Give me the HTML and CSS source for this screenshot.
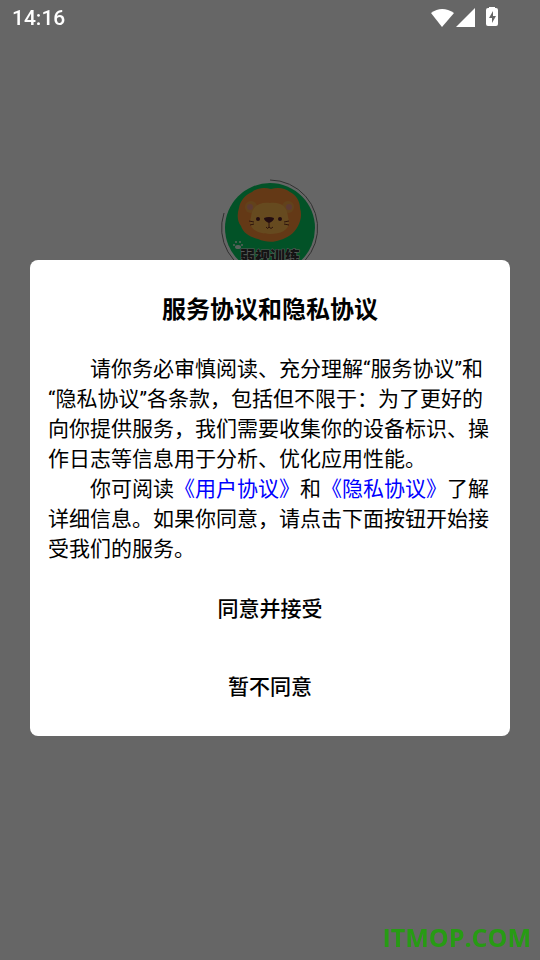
FILE: index.html
```html
<!DOCTYPE html>
<html lang="zh-CN">
<head>
  <meta charset="UTF-8">
  <meta name="viewport" content="width=device-width, initial-scale=1.0">
  <title>弱视训练</title>
  <link rel="stylesheet" href="styles.css">
</head>
<body>
  <!-- Splash page -->
  <main class="splash">
    <svg class="logo" viewBox="0 0 100 100" role="img" aria-label="弱视训练">
      <circle class="logo-bg" cx="50" cy="50" r="45"/>
      <path class="logo-ring" d="M50 2A48 48 0 1 1 4 35"/>
      <path class="mane" d="M51 11C58 9 65 10 70 14C76 17 80 23 80 30C82 36 81 42 78 48C74 56 67 60 60 62C53 65 45 64 38 61C30 59 23 55 21 48C17 43 17 36 19 30C20 23 25 17 32 14C37 10 44 9 51 11Z"/>
      <ellipse class="ear" cx="31" cy="29" rx="6" ry="6"/>
      <ellipse class="ear" cx="68" cy="29" rx="6" ry="6"/>
      <ellipse class="ear-in" cx="30" cy="29" rx="3" ry="3"/>
      <ellipse class="ear-in" cx="69" cy="29" rx="3" ry="3"/>
      <path class="face" d="M50 25C62 24 67 29 68 39C72 51 62 56 50 56C38 56 27 51 31 39C32 29 38 24 50 25Z"/>
      <circle class="dark" cx="38" cy="41" r="2"/>
      <circle class="dark" cx="60" cy="41" r="2"/>
      <path class="dark" d="M44 40Q49 38 54 40Q54 43 49 45Q44 43 44 40Z"/>
      <path class="line" d="M49 44V50M46 49Q48 52 49 49Q51 52 53 49M29 43L34 44M30 47L34 46M64 44L69 43M64 46L69 47"/>
      <g class="paw">
        <ellipse cx="18" cy="69" rx="3" ry="2"/>
        <circle cx="14" cy="67" r="1"/>
        <circle cx="16" cy="64" r="1"/>
        <circle cx="20" cy="64" r="1"/>
        <circle cx="22" cy="67" r="1"/>
      </g>
      <text class="logo-text" x="50" y="84" text-anchor="middle">弱视训练</text>
    </svg>
  </main>

  <!-- Mask and dialog -->
  <div class="mask">
    <header class="status">
      <span class="time">14:16</span>
      <svg class="status-icons" viewBox="0 0 70 22" aria-hidden="true">
        <path d="M0 6Q11 -2 23 6L11 20Z"/>
        <path d="M44 1V20H25Z"/>
        <path fill-rule="evenodd" d="M58 0H64V1H65Q67 1 67 3V17Q67 19 65 19H57Q55 19 55 17V3Q55 1 57 1H58ZM62 4L58 11H61V16L65 9H62Z"/>
      </svg>
    </header>
    <div class="dialog-wrap">
      <section class="dialog" role="dialog" aria-labelledby="dialogTitle">
        <h1 id="dialogTitle">服务协议和隐私协议</h1>
        <div class="content">
          <p>请你务必审慎阅读、充分理解“服务协议”和“隐私协议”各条款，包括但不限于：为了更好的向你提供服务，我们需要收集你的设备标识、操作日志等信息用于分析、优化应用性能。</p>
          <p>你可阅读<a href="#user">《用户协议》</a>和<a href="#privacy">《隐私协议》</a>了解详细信息。如果你同意，请点击下面按钮开始接受我们的服务。</p>
        </div>
        <div class="buttons">
          <button type="button">同意并接受</button>
          <button type="button">暂不同意</button>
        </div>
      </section>
    </div>
  </div>
  <div class="watermark">ITMOP.COM</div>
</body>
</html>
```
FILE: styles.css
```css
* {
  box-sizing: border-box;
}
body {
  margin: 0;
  min-height: 100vh;
  background-color: #fff;
  color: #000;
  font-family: Roboto, "Noto Sans CJK SC", sans-serif;
}
.splash {
  display: flex;
  justify-content: center;
  padding-top: 178px;
}

/* logo */
.logo {
  width: 100px;
  height: 100px;
}
.logo-bg {
  fill: #06cd62;
}
.logo-ring {
  fill: none;
  stroke: #777;
  stroke-width: 1;
}
.mane {
  fill: #fa9038;
}
.ear {
  fill: #f5a545;
}
.ear-in {
  fill: #e89280;
}
.face {
  fill: #ffb94f;
}
.dark {
  fill: #551f2a;
}
.line {
  fill: none;
  stroke: #703020;
  stroke-width: 1;
}
.paw {
  fill: #e0f5e6;
}
.logo-text {
  font-size: 15px;
  font-weight: 900;
  fill: #333;
  stroke: #ddd;
  stroke-width: 1px;
  paint-order: stroke;
}

/* mask */
.mask {
  position: fixed;
  inset: 0;
  display: flex;
  flex-direction: column;
  background-color: rgba(0, 0, 0, 0.6);
}
.status {
  display: flex;
  align-items: center;
  justify-content: space-between;
  height: 36px;
  padding: 0 39px 0 12px;
  color: #fff;
}
.time {
  font-size: 21px;
  font-weight: 500;
}
.status-icons {
  width: 70px;
  height: 22px;
  fill: #fff;
}
.dialog-wrap {
  flex: 1;
  display: flex;
  align-items: center;
  padding: 0 30px;
}
.dialog {
  width: 100%;
  padding: 32px 18px 21px;
  border-radius: 8px;
  background-color: #fff;
}
h1 {
  margin: 0 0 26px;
  font-size: 24px;
  line-height: 36px;
  font-weight: 700;
  text-align: center;
}
.content {
  font-size: 21px;
  line-height: 30px;
}
p {
  margin: 0;
  text-indent: 2em;
}
a {
  color: #00f;
  text-decoration: none;
}
.buttons {
  display: flex;
  flex-direction: column;
  gap: 18px;
  margin-top: 13px;
}
button {
  height: 60px;
  padding: 0;
  border: none;
  background: none;
  color: #000;
  font-family: inherit;
  font-size: 21px;
  font-weight: 500;
  cursor: pointer;
}

.watermark {
  position: fixed;
  right: 9px;
  bottom: 6px;
  color: #279b14;
  font-family: "Open Sans", sans-serif;
  font-size: 25px;
  line-height: 34px;
  font-weight: 700;
}
```
